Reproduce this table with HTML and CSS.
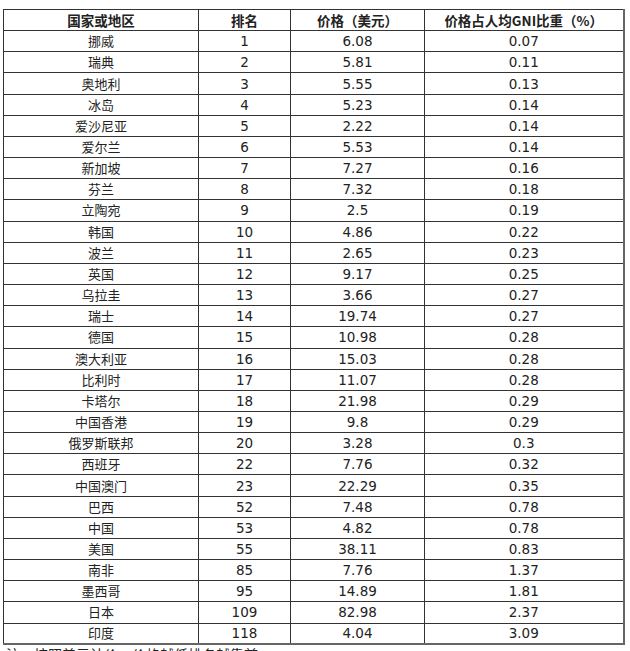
FILE: index.html
```html
<!DOCTYPE html>
<html lang="zh">
<head>
<meta charset="utf-8">
<link rel="stylesheet" href="styles.css">
</head>
<body>
<div class="page">
<table class="tbl">
<colgroup><col class="c1"><col class="c2"><col class="c3"><col class="c4"></colgroup>
<thead>
<tr><th>国家或地区</th><th>排名</th><th>价格（美元）</th><th>价格占人均GNI比重（%）</th></tr>
</thead>
<tbody>
<tr><td class="cn">挪威</td><td>1</td><td>6.08</td><td>0.07</td></tr>
<tr><td class="cn">瑞典</td><td>2</td><td>5.81</td><td>0.11</td></tr>
<tr><td class="cn">奥地利</td><td>3</td><td>5.55</td><td>0.13</td></tr>
<tr><td class="cn">冰岛</td><td>4</td><td>5.23</td><td>0.14</td></tr>
<tr><td class="cn">爱沙尼亚</td><td>5</td><td>2.22</td><td>0.14</td></tr>
<tr><td class="cn">爱尔兰</td><td>6</td><td>5.53</td><td>0.14</td></tr>
<tr><td class="cn">新加坡</td><td>7</td><td>7.27</td><td>0.16</td></tr>
<tr><td class="cn">芬兰</td><td>8</td><td>7.32</td><td>0.18</td></tr>
<tr><td class="cn">立陶宛</td><td>9</td><td>2.5</td><td>0.19</td></tr>
<tr><td class="cn">韩国</td><td>10</td><td>4.86</td><td>0.22</td></tr>
<tr><td class="cn">波兰</td><td>11</td><td>2.65</td><td>0.23</td></tr>
<tr><td class="cn">英国</td><td>12</td><td>9.17</td><td>0.25</td></tr>
<tr><td class="cn">乌拉圭</td><td>13</td><td>3.66</td><td>0.27</td></tr>
<tr><td class="cn">瑞士</td><td>14</td><td>19.74</td><td>0.27</td></tr>
<tr><td class="cn">德国</td><td>15</td><td>10.98</td><td>0.28</td></tr>
<tr><td class="cn">澳大利亚</td><td>16</td><td>15.03</td><td>0.28</td></tr>
<tr><td class="cn">比利时</td><td>17</td><td>11.07</td><td>0.28</td></tr>
<tr><td class="cn">卡塔尔</td><td>18</td><td>21.98</td><td>0.29</td></tr>
<tr><td class="cn">中国香港</td><td>19</td><td>9.8</td><td>0.29</td></tr>
<tr><td class="cn">俄罗斯联邦</td><td>20</td><td>3.28</td><td>0.3</td></tr>
<tr><td class="cn">西班牙</td><td>22</td><td>7.76</td><td>0.32</td></tr>
<tr><td class="cn">中国澳门</td><td>23</td><td>22.29</td><td>0.35</td></tr>
<tr><td class="cn">巴西</td><td>52</td><td>7.48</td><td>0.78</td></tr>
<tr><td class="cn">中国</td><td>53</td><td>4.82</td><td>0.78</td></tr>
<tr><td class="cn">美国</td><td>55</td><td>38.11</td><td>0.83</td></tr>
<tr><td class="cn">南非</td><td>85</td><td>7.76</td><td>1.37</td></tr>
<tr><td class="cn">墨西哥</td><td>95</td><td>14.89</td><td>1.81</td></tr>
<tr><td class="cn">日本</td><td>109</td><td>82.98</td><td>2.37</td></tr>
<tr><td class="cn">印度</td><td>118</td><td>4.04</td><td>3.09</td></tr>
</tbody>
</table>
<p class="note">注：按照美元计价，价格越低排名越靠前</p>
</div>
</body>
</html>
```
FILE: styles.css
```css
html, body {
  margin: 0;
  padding: 0;
  background: #ffffff;
}
.page {
  padding: 9px 0 0 3px;
  width: 627px;
}
.tbl {
  border-collapse: collapse;
  width: 620px;
  table-layout: fixed;
  font-family: "DejaVu Sans", "Noto Sans CJK SC", sans-serif;
  color: #222;
  border-right: 2px solid #666;
  border-bottom: 2px solid #666;
}
.c1 { width: 195px; }
.c2 { width: 92px; }
.c3 { width: 134px; }
.c4 { width: 199px; }
.tbl tr {
  height: 21.17px;
}
.tbl th, .tbl td {
  border: 1px solid #333;
  padding: 0;
  text-align: center;
  vertical-align: middle;
  line-height: 16px;
  white-space: nowrap;
}
.tbl th {
  font-family: "Noto Sans CJK SC", sans-serif;
  font-weight: bold;
  font-size: 13.5px;
}
.tbl td {
  font-size: 13.5px;
}
.tbl td.cn {
  font-family: "Noto Sans CJK SC", sans-serif;
  font-size: 13px;
}
.note {
  margin: 0;
  padding: 1px 0 0 3px;
  font-family: "Noto Sans CJK SC", sans-serif;
  font-size: 14px;
  line-height: 16px;
  color: #222;
}
```
